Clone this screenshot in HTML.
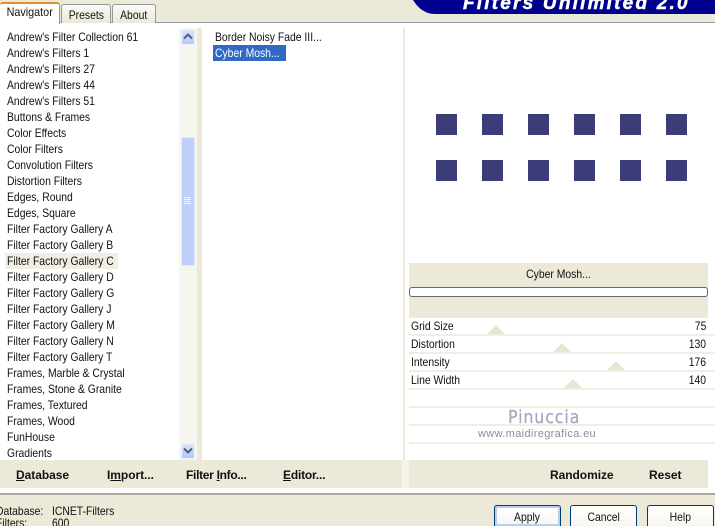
<!DOCTYPE html>
<html style="width:715px;height:526px;overflow:hidden"><head><meta charset="utf-8">
<style>
html,body{margin:0;padding:0}
body{width:715px;height:526px;overflow:hidden;background:#ece9d8;position:relative;font-family:"Liberation Sans",sans-serif;font-size:12px;color:#111}
div{position:absolute;box-sizing:border-box}
.t{white-space:nowrap;line-height:16px;height:16px;transform:scaleX(.865);transform-origin:0 0}
.r{transform-origin:100% 0}
.c{transform-origin:50% 0}
.w{white-space:nowrap}
.b{font-weight:bold;white-space:nowrap;line-height:16px;height:16px;color:#111;letter-spacing:-.05px}
u{text-decoration:underline}
span{display:inline-block;transform:scaleX(.865)}
.tab{background:linear-gradient(#fbfaf6,#ece9d8);border:1px solid #919b9c;border-bottom:none;border-radius:3px 3px 0 0;text-align:center;line-height:20px}
.sq{width:21px;height:21px;background:#3c3c78}
.line{left:409px;width:306px;height:2px;background:#f1efe3}
.tri{width:0;height:0;border-left:9px solid transparent;border-right:9px solid transparent;border-bottom:9px solid #e9e5d3}
.btn{background:linear-gradient(#fff,#f7f6f1);border:1px solid #003c74;border-bottom:none;border-radius:3px 3px 0 0;text-align:center;line-height:22px;height:21px;top:505px}
.sb{left:181px;width:14px;height:16px;background:linear-gradient(#dbe5fb,#b5c8f5);border:1px solid #eef2fd;border-radius:2px}
</style></head><body>

<!-- header -->
<svg width="302" height="15" style="position:absolute;left:413px;top:0"><path d="M0 0H302V14H22C12 14 5 8 0 0Z" fill="#00008e"/></svg>
<div class="w" style="left:463px;top:-5px;height:18px;line-height:18px;font-size:19px;font-weight:bold;font-style:italic;color:#fff;letter-spacing:2.2px;-webkit-text-stroke:.5px #fff">Filters Unlimited 2.0</div>

<!-- panel -->
<div style="left:0;top:22px;width:715px;height:473px;background:#fff;border-top:1px solid #919b9c;border-bottom:2px solid #a9a99c"></div>

<!-- tabs -->
<div class="tab" style="left:61px;top:4px;width:50px;height:19px"><span>Presets</span></div>
<div class="tab" style="left:112px;top:4px;width:44px;height:19px"><span>About</span></div>
<div style="left:0;top:2px;width:60px;height:22px;background:#fff;border-right:1px solid #919b9c;border-top:2px solid #e68b2c;border-radius:3px 3px 0 0;text-align:center;line-height:17px"><span style="transform:scaleX(.9)">Navigator</span></div>

<!-- list -->
<div style="left:5px;top:253px;width:113px;height:16px;background:#f1efe2"></div>
<div class="t" style="left:7px;top:29px">Andrew's Filter Collection 61</div>
<div class="t" style="left:7px;top:45px">Andrew's Filters 1</div>
<div class="t" style="left:7px;top:61px">Andrew's Filters 27</div>
<div class="t" style="left:7px;top:77px">Andrew's Filters 44</div>
<div class="t" style="left:7px;top:93px">Andrew's Filters 51</div>
<div class="t" style="left:7px;top:109px">Buttons &amp; Frames</div>
<div class="t" style="left:7px;top:125px">Color Effects</div>
<div class="t" style="left:7px;top:141px">Color Filters</div>
<div class="t" style="left:7px;top:157px">Convolution Filters</div>
<div class="t" style="left:7px;top:173px">Distortion Filters</div>
<div class="t" style="left:7px;top:189px">Edges, Round</div>
<div class="t" style="left:7px;top:205px">Edges, Square</div>
<div class="t" style="left:7px;top:221px">Filter Factory Gallery A</div>
<div class="t" style="left:7px;top:237px">Filter Factory Gallery B</div>
<div class="t" style="left:7px;top:253px">Filter Factory Gallery C</div>
<div class="t" style="left:7px;top:269px">Filter Factory Gallery D</div>
<div class="t" style="left:7px;top:285px">Filter Factory Gallery G</div>
<div class="t" style="left:7px;top:301px">Filter Factory Gallery J</div>
<div class="t" style="left:7px;top:317px">Filter Factory Gallery M</div>
<div class="t" style="left:7px;top:333px">Filter Factory Gallery N</div>
<div class="t" style="left:7px;top:349px">Filter Factory Gallery T</div>
<div class="t" style="left:7px;top:365px">Frames, Marble &amp; Crystal</div>
<div class="t" style="left:7px;top:381px">Frames, Stone &amp; Granite</div>
<div class="t" style="left:7px;top:397px">Frames, Textured</div>
<div class="t" style="left:7px;top:413px">Frames, Wood</div>
<div class="t" style="left:7px;top:429px">FunHouse</div>
<div class="t" style="left:7px;top:445px">Gradients</div>

<!-- scrollbar -->
<div style="left:179px;top:28px;width:18px;height:432px;background:#f6f5ee"></div>
<div style="left:197px;top:28px;width:5px;height:432px;background:#ece9d8"></div>
<div class="sb" style="top:29px"></div>
<svg width="14" height="16" style="position:absolute;left:181px;top:29px"><path d="M3 9.5L7 5.5L11 9.5" fill="none" stroke="#4d6185" stroke-width="2"/></svg>
<div style="left:181px;top:137px;width:14px;height:129px;background:#bdcffa;border:1px solid #e4ebfc;border-radius:2px"></div>
<svg width="8" height="10" style="position:absolute;left:184px;top:196px"><path d="M0 1.5H7M0 3.5H7M0 5.5H7M0 7.5H7" stroke="#eef3ff" stroke-width="1"/></svg>
<div class="sb" style="top:443px"></div>
<svg width="14" height="16" style="position:absolute;left:181px;top:443px"><path d="M3 5.5L7 9.5L11 5.5" fill="none" stroke="#4d6185" stroke-width="2"/></svg>

<!-- second list -->
<div class="t" style="left:215px;top:29px">Border Noisy Fade III...</div>
<div style="left:213px;top:45px;width:73px;height:16px;background:#316ac5"></div>
<div class="t" style="left:215px;top:45px;color:#fff">Cyber Mosh...</div>

<!-- divider -->
<div style="left:403px;top:28px;width:2px;height:432px;background:#ece9d8"></div>
<div style="left:402px;top:460px;width:7px;height:28px;background:#f5f3ea"></div>

<!-- preview squares -->
<div class="sq" style="left:436px;top:114px"></div>
<div class="sq" style="left:482px;top:114px"></div>
<div class="sq" style="left:528px;top:114px"></div>
<div class="sq" style="left:574px;top:114px"></div>
<div class="sq" style="left:620px;top:114px"></div>
<div class="sq" style="left:666px;top:114px"></div>
<div class="sq" style="left:436px;top:160px"></div>
<div class="sq" style="left:482px;top:160px"></div>
<div class="sq" style="left:528px;top:160px"></div>
<div class="sq" style="left:574px;top:160px"></div>
<div class="sq" style="left:620px;top:160px"></div>
<div class="sq" style="left:666px;top:160px"></div>

<!-- name / progress -->
<div style="left:409px;top:263px;width:299px;height:55px;background:#ece9d8"></div>
<div class="t c" style="left:409px;top:266px;width:299px;text-align:center">Cyber Mosh...</div>
<div style="left:409px;top:287px;width:299px;height:10px;background:#fff;border:1px solid #686868;border-radius:3px"></div>

<!-- sliders -->
<div class="line" style="top:334px"></div>
<div class="line" style="top:352px"></div>
<div class="line" style="top:370px"></div>
<div class="line" style="top:388px"></div>
<div class="line" style="top:406px"></div>
<div class="line" style="top:424px"></div>
<div class="line" style="top:442px"></div>
<div class="tri" style="left:487px;top:325px"></div>
<div class="tri" style="left:553px;top:343px"></div>
<div class="tri" style="left:607px;top:361px"></div>
<div class="tri" style="left:564px;top:379px"></div>
<div class="t" style="left:411px;top:318px">Grid Size</div>
<div class="t" style="left:411px;top:336px">Distortion</div>
<div class="t" style="left:411px;top:354px">Intensity</div>
<div class="t" style="left:411px;top:372px">Line Width</div>
<div class="t r" style="right:9px;top:318px">75</div>
<div class="t r" style="right:9px;top:336px">130</div>
<div class="t r" style="right:9px;top:354px">176</div>
<div class="t r" style="right:9px;top:372px">140</div>

<!-- watermark -->
<div class="w" style="left:508px;top:408px;height:20px;line-height:20px;font-family:'DejaVu Sans',sans-serif;font-size:18px;color:#a6a6c0;letter-spacing:1px;-webkit-text-stroke:.25px #a6a6c0;transform:scaleX(.88);transform-origin:0 0">Pinuccia</div>
<div class="w" style="left:478px;top:426px;line-height:16px;font-size:11px;color:#8c8c9c;letter-spacing:.35px">www.maidiregrafica.eu</div>

<!-- button bars -->
<div style="left:0;top:460px;width:402px;height:28px;background:#ece9d8"></div>
<div style="left:409px;top:460px;width:299px;height:28px;background:#ece9d8"></div>
<div class="b" style="left:16px;top:467px"><u>D</u>atabase</div>
<div class="b" style="left:107px;top:467px">I<u>m</u>port...</div>
<div class="b" style="left:186px;top:467px;letter-spacing:-.3px">Filter <u>I</u>nfo...</div>
<div class="b" style="left:283px;top:467px;letter-spacing:-.2px"><u>E</u>ditor...</div>
<div class="b" style="left:550px;top:467px">Randomize</div>
<div class="b" style="left:649px;top:467px">Reset</div>

<!-- status -->
<div class="t" style="left:-4px;top:503px">Database:</div>
<div class="t" style="left:52px;top:503px">ICNET-Filters</div>
<div class="t" style="left:-4px;top:515px">Filters:</div>
<div class="t" style="left:52px;top:515px">600</div>

<!-- buttons -->
<div class="btn" style="left:494px;width:67px;box-shadow:inset 0 0 0 2px #b9cdf0"><span>Apply</span></div>
<div class="btn" style="left:570px;width:67px"><span>Cancel</span></div>
<div class="btn" style="left:647px;width:67px"><span>Help</span></div>

</body></html>
